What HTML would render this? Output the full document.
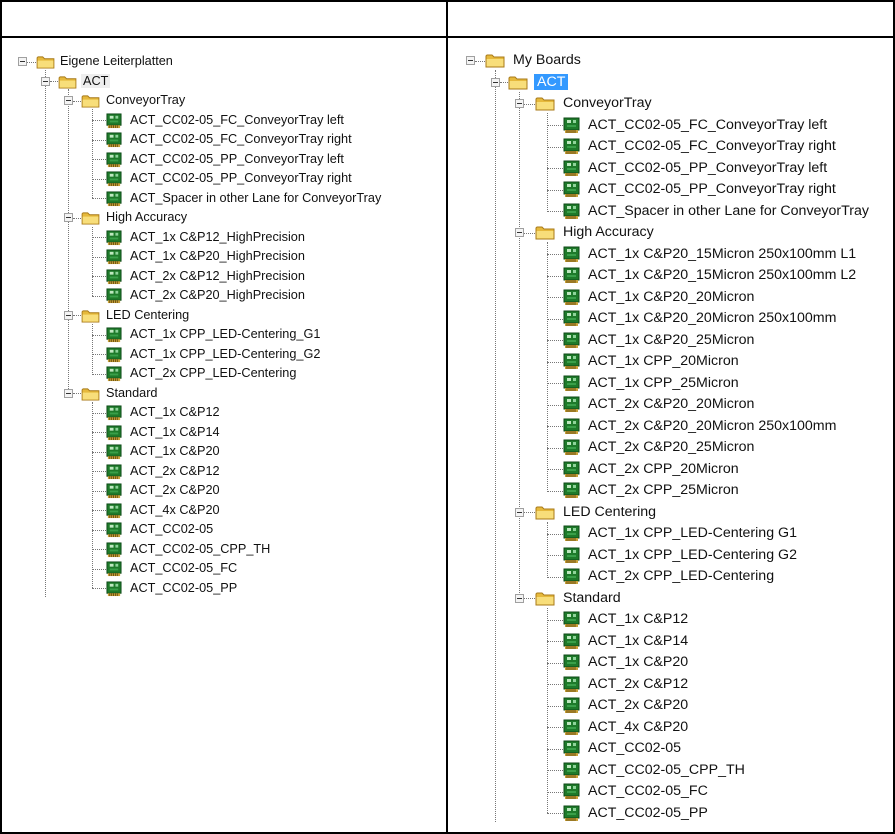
<!DOCTYPE html>
<html><head><meta charset="utf-8">
<style>
*{margin:0;padding:0;box-sizing:border-box}
html,body{width:895px;height:834px;background:#fff;overflow:hidden}
body{position:relative;font-family:"Liberation Sans",Tahoma,sans-serif;color:#111}
.b{position:absolute;background:#000}
.t{position:absolute}
.r{position:relative;white-space:nowrap}
.L .r{height:19.5px;font-size:12.7px;line-height:19.5px}
.R .r{height:21.5px;font-size:14.2px;line-height:21.5px}
.mn{position:absolute;width:9px;height:9px;border:1px solid #a0a0a0;background:#f4f4f4}
.mn:after{content:"";position:absolute;left:1px;top:3px;width:5px;height:1px;background:#333}
.hc{position:absolute;height:0;border-top:1px dotted #777}
.vc{position:absolute;width:0;border-left:1px dotted #777}
.tx{position:absolute;top:0}
.fo{position:absolute}
.bd{position:absolute}
.sel{background:#3399ff;color:#fff;padding:0 3px;margin-left:-3px}
.foc{background:#eee;padding:0 2px;margin-left:-2px}
</style></head><body>
<svg width="0" height="0" style="position:absolute">
<defs>
<symbol id="fold" viewBox="0 0 20 15"><path d="M1 3 L1 14 L19 14 L19 4 L9 4 L7 2 L2 2 Z" fill="#e6b93c" stroke="#a87a18" stroke-width="1"/><path d="M1.5 6 L18.5 6 L18.5 13.5 L1.5 13.5 Z" fill="#f8de7a"/></symbol>
<symbol id="brd" viewBox="0 0 17 17"><rect x="1" y="1" width="15" height="12" fill="#1e7a2a" stroke="#0d4a16"/><rect x="4" y="3" width="4" height="3" fill="#bfe8c0"/><rect x="10" y="3" width="3" height="3" fill="#8fd49a"/><rect x="4" y="8" width="9" height="2" fill="#3aa04a"/><rect x="2" y="13" width="13" height="3" fill="#c9a23a"/><path d="M4 13v3M6 13v3M8 13v3M10 13v3M12 13v3" stroke="#6b5010"/></symbol>
</defs></svg>

<div class="b" style="left:0;top:0;width:895px;height:2px"></div>
<div class="b" style="left:0;top:36px;width:895px;height:2px"></div>
<div class="b" style="left:0;top:832px;width:895px;height:2px"></div>
<div class="b" style="left:0;top:0;width:2px;height:834px"></div>
<div class="b" style="left:446px;top:0;width:2px;height:834px"></div>
<div class="b" style="left:893px;top:0;width:2px;height:834px"></div>

<div class="vc" style="left:45px;top:70px;height:527px"></div>
<div class="vc" style="left:68px;top:89px;height:304px"></div>
<div class="vc" style="left:92px;top:109px;height:89px"></div>
<div class="vc" style="left:92px;top:227px;height:69px"></div>
<div class="vc" style="left:92px;top:324px;height:49px"></div>
<div class="vc" style="left:92px;top:402px;height:186px"></div>

<div class="t L" style="left:0;top:52.25px;width:446px">
<div class="r"><span class="mn" style="left:18px;top:5px"></span><span class="hc" style="left:27px;width:9px;top:9.5px"></span><svg class="fo" style="left:36px;top:3px" width="19" height="14"><use href="#fold"/></svg><span class="tx" style="left:60px">Eigene Leiterplatten</span></div>
<div class="r"><span class="mn" style="left:41px;top:5px"></span><span class="hc" style="left:50px;width:8px;top:9.5px"></span><svg class="fo" style="left:58px;top:3px" width="19" height="14"><use href="#fold"/></svg><span class="tx" style="left:83px"><span class="foc">ACT</span></span></div>
<div class="r"><span class="mn" style="left:64px;top:5px"></span><span class="hc" style="left:73px;width:8px;top:9.5px"></span><svg class="fo" style="left:81px;top:3px" width="19" height="14"><use href="#fold"/></svg><span class="tx" style="left:106px">ConveyorTray</span></div>
<div class="r"><span class="hc" style="left:92px;width:14px;top:9.5px"></span><svg class="bd" style="left:106px;top:2px" width="16" height="16"><use href="#brd"/></svg><span class="tx" style="left:130px">ACT_CC02-05_FC_ConveyorTray left</span></div>
<div class="r"><span class="hc" style="left:92px;width:14px;top:9.5px"></span><svg class="bd" style="left:106px;top:2px" width="16" height="16"><use href="#brd"/></svg><span class="tx" style="left:130px">ACT_CC02-05_FC_ConveyorTray right</span></div>
<div class="r"><span class="hc" style="left:92px;width:14px;top:9.5px"></span><svg class="bd" style="left:106px;top:2px" width="16" height="16"><use href="#brd"/></svg><span class="tx" style="left:130px">ACT_CC02-05_PP_ConveyorTray left</span></div>
<div class="r"><span class="hc" style="left:92px;width:14px;top:9.5px"></span><svg class="bd" style="left:106px;top:2px" width="16" height="16"><use href="#brd"/></svg><span class="tx" style="left:130px">ACT_CC02-05_PP_ConveyorTray right</span></div>
<div class="r"><span class="hc" style="left:92px;width:14px;top:9.5px"></span><svg class="bd" style="left:106px;top:2px" width="16" height="16"><use href="#brd"/></svg><span class="tx" style="left:130px">ACT_Spacer in other Lane for ConveyorTray</span></div>
<div class="r"><span class="mn" style="left:64px;top:5px"></span><span class="hc" style="left:73px;width:8px;top:9.5px"></span><svg class="fo" style="left:81px;top:3px" width="19" height="14"><use href="#fold"/></svg><span class="tx" style="left:106px">High Accuracy</span></div>
<div class="r"><span class="hc" style="left:92px;width:14px;top:9.5px"></span><svg class="bd" style="left:106px;top:2px" width="16" height="16"><use href="#brd"/></svg><span class="tx" style="left:130px">ACT_1x C&amp;P12_HighPrecision</span></div>
<div class="r"><span class="hc" style="left:92px;width:14px;top:9.5px"></span><svg class="bd" style="left:106px;top:2px" width="16" height="16"><use href="#brd"/></svg><span class="tx" style="left:130px">ACT_1x C&amp;P20_HighPrecision</span></div>
<div class="r"><span class="hc" style="left:92px;width:14px;top:9.5px"></span><svg class="bd" style="left:106px;top:2px" width="16" height="16"><use href="#brd"/></svg><span class="tx" style="left:130px">ACT_2x C&amp;P12_HighPrecision</span></div>
<div class="r"><span class="hc" style="left:92px;width:14px;top:9.5px"></span><svg class="bd" style="left:106px;top:2px" width="16" height="16"><use href="#brd"/></svg><span class="tx" style="left:130px">ACT_2x C&amp;P20_HighPrecision</span></div>
<div class="r"><span class="mn" style="left:64px;top:5px"></span><span class="hc" style="left:73px;width:8px;top:9.5px"></span><svg class="fo" style="left:81px;top:3px" width="19" height="14"><use href="#fold"/></svg><span class="tx" style="left:106px">LED Centering</span></div>
<div class="r"><span class="hc" style="left:92px;width:14px;top:9.5px"></span><svg class="bd" style="left:106px;top:2px" width="16" height="16"><use href="#brd"/></svg><span class="tx" style="left:130px">ACT_1x CPP_LED-Centering_G1</span></div>
<div class="r"><span class="hc" style="left:92px;width:14px;top:9.5px"></span><svg class="bd" style="left:106px;top:2px" width="16" height="16"><use href="#brd"/></svg><span class="tx" style="left:130px">ACT_1x CPP_LED-Centering_G2</span></div>
<div class="r"><span class="hc" style="left:92px;width:14px;top:9.5px"></span><svg class="bd" style="left:106px;top:2px" width="16" height="16"><use href="#brd"/></svg><span class="tx" style="left:130px">ACT_2x CPP_LED-Centering</span></div>
<div class="r"><span class="mn" style="left:64px;top:5px"></span><span class="hc" style="left:73px;width:8px;top:9.5px"></span><svg class="fo" style="left:81px;top:3px" width="19" height="14"><use href="#fold"/></svg><span class="tx" style="left:106px">Standard</span></div>
<div class="r"><span class="hc" style="left:92px;width:14px;top:9.5px"></span><svg class="bd" style="left:106px;top:2px" width="16" height="16"><use href="#brd"/></svg><span class="tx" style="left:130px">ACT_1x C&amp;P12</span></div>
<div class="r"><span class="hc" style="left:92px;width:14px;top:9.5px"></span><svg class="bd" style="left:106px;top:2px" width="16" height="16"><use href="#brd"/></svg><span class="tx" style="left:130px">ACT_1x C&amp;P14</span></div>
<div class="r"><span class="hc" style="left:92px;width:14px;top:9.5px"></span><svg class="bd" style="left:106px;top:2px" width="16" height="16"><use href="#brd"/></svg><span class="tx" style="left:130px">ACT_1x C&amp;P20</span></div>
<div class="r"><span class="hc" style="left:92px;width:14px;top:9.5px"></span><svg class="bd" style="left:106px;top:2px" width="16" height="16"><use href="#brd"/></svg><span class="tx" style="left:130px">ACT_2x C&amp;P12</span></div>
<div class="r"><span class="hc" style="left:92px;width:14px;top:9.5px"></span><svg class="bd" style="left:106px;top:2px" width="16" height="16"><use href="#brd"/></svg><span class="tx" style="left:130px">ACT_2x C&amp;P20</span></div>
<div class="r"><span class="hc" style="left:92px;width:14px;top:9.5px"></span><svg class="bd" style="left:106px;top:2px" width="16" height="16"><use href="#brd"/></svg><span class="tx" style="left:130px">ACT_4x C&amp;P20</span></div>
<div class="r"><span class="hc" style="left:92px;width:14px;top:9.5px"></span><svg class="bd" style="left:106px;top:2px" width="16" height="16"><use href="#brd"/></svg><span class="tx" style="left:130px">ACT_CC02-05</span></div>
<div class="r"><span class="hc" style="left:92px;width:14px;top:9.5px"></span><svg class="bd" style="left:106px;top:2px" width="16" height="16"><use href="#brd"/></svg><span class="tx" style="left:130px">ACT_CC02-05_CPP_TH</span></div>
<div class="r"><span class="hc" style="left:92px;width:14px;top:9.5px"></span><svg class="bd" style="left:106px;top:2px" width="16" height="16"><use href="#brd"/></svg><span class="tx" style="left:130px">ACT_CC02-05_FC</span></div>
<div class="r"><span class="hc" style="left:92px;width:14px;top:9.5px"></span><svg class="bd" style="left:106px;top:2px" width="16" height="16"><use href="#brd"/></svg><span class="tx" style="left:130px">ACT_CC02-05_PP</span></div>
</div>

<div class="vc" style="left:495px;top:70px;height:752px"></div>
<div class="vc" style="left:519px;top:92px;height:507px"></div>
<div class="vc" style="left:547px;top:113px;height:99px"></div>
<div class="vc" style="left:547px;top:242px;height:250px"></div>
<div class="vc" style="left:547px;top:522px;height:56px"></div>
<div class="vc" style="left:547px;top:608px;height:205px"></div>

<div class="t R" style="left:0;top:50.25px;width:893px">
<div class="r"><span class="mn" style="left:466px;top:6px"></span><span class="hc" style="left:475px;width:10px;top:10.5px"></span><svg class="fo" style="left:485px;top:3px" width="20" height="15"><use href="#fold"/></svg><span class="tx" style="left:513px">My Boards</span></div>
<div class="r"><span class="mn" style="left:490.5px;top:6px"></span><span class="hc" style="left:499.5px;width:8px;top:10.5px"></span><svg class="fo" style="left:508px;top:3px" width="20" height="15"><use href="#fold"/></svg><span class="tx" style="left:537px"><span class="sel">ACT</span></span></div>
<div class="r"><span class="mn" style="left:515px;top:6px"></span><span class="hc" style="left:524px;width:11px;top:10.5px"></span><svg class="fo" style="left:535px;top:3px" width="20" height="15"><use href="#fold"/></svg><span class="tx" style="left:563px">ConveyorTray</span></div>
<div class="r"><span class="hc" style="left:547px;width:16px;top:10.5px"></span><svg class="bd" style="left:563px;top:2px" width="17" height="17"><use href="#brd"/></svg><span class="tx" style="left:588px">ACT_CC02-05_FC_ConveyorTray left</span></div>
<div class="r"><span class="hc" style="left:547px;width:16px;top:10.5px"></span><svg class="bd" style="left:563px;top:2px" width="17" height="17"><use href="#brd"/></svg><span class="tx" style="left:588px">ACT_CC02-05_FC_ConveyorTray right</span></div>
<div class="r"><span class="hc" style="left:547px;width:16px;top:10.5px"></span><svg class="bd" style="left:563px;top:2px" width="17" height="17"><use href="#brd"/></svg><span class="tx" style="left:588px">ACT_CC02-05_PP_ConveyorTray left</span></div>
<div class="r"><span class="hc" style="left:547px;width:16px;top:10.5px"></span><svg class="bd" style="left:563px;top:2px" width="17" height="17"><use href="#brd"/></svg><span class="tx" style="left:588px">ACT_CC02-05_PP_ConveyorTray right</span></div>
<div class="r"><span class="hc" style="left:547px;width:16px;top:10.5px"></span><svg class="bd" style="left:563px;top:2px" width="17" height="17"><use href="#brd"/></svg><span class="tx" style="left:588px">ACT_Spacer in other Lane for ConveyorTray</span></div>
<div class="r"><span class="mn" style="left:515px;top:6px"></span><span class="hc" style="left:524px;width:11px;top:10.5px"></span><svg class="fo" style="left:535px;top:3px" width="20" height="15"><use href="#fold"/></svg><span class="tx" style="left:563px">High Accuracy</span></div>
<div class="r"><span class="hc" style="left:547px;width:16px;top:10.5px"></span><svg class="bd" style="left:563px;top:2px" width="17" height="17"><use href="#brd"/></svg><span class="tx" style="left:588px">ACT_1x C&amp;P20_15Micron 250x100mm L1</span></div>
<div class="r"><span class="hc" style="left:547px;width:16px;top:10.5px"></span><svg class="bd" style="left:563px;top:2px" width="17" height="17"><use href="#brd"/></svg><span class="tx" style="left:588px">ACT_1x C&amp;P20_15Micron 250x100mm L2</span></div>
<div class="r"><span class="hc" style="left:547px;width:16px;top:10.5px"></span><svg class="bd" style="left:563px;top:2px" width="17" height="17"><use href="#brd"/></svg><span class="tx" style="left:588px">ACT_1x C&amp;P20_20Micron</span></div>
<div class="r"><span class="hc" style="left:547px;width:16px;top:10.5px"></span><svg class="bd" style="left:563px;top:2px" width="17" height="17"><use href="#brd"/></svg><span class="tx" style="left:588px">ACT_1x C&amp;P20_20Micron 250x100mm</span></div>
<div class="r"><span class="hc" style="left:547px;width:16px;top:10.5px"></span><svg class="bd" style="left:563px;top:2px" width="17" height="17"><use href="#brd"/></svg><span class="tx" style="left:588px">ACT_1x C&amp;P20_25Micron</span></div>
<div class="r"><span class="hc" style="left:547px;width:16px;top:10.5px"></span><svg class="bd" style="left:563px;top:2px" width="17" height="17"><use href="#brd"/></svg><span class="tx" style="left:588px">ACT_1x CPP_20Micron</span></div>
<div class="r"><span class="hc" style="left:547px;width:16px;top:10.5px"></span><svg class="bd" style="left:563px;top:2px" width="17" height="17"><use href="#brd"/></svg><span class="tx" style="left:588px">ACT_1x CPP_25Micron</span></div>
<div class="r"><span class="hc" style="left:547px;width:16px;top:10.5px"></span><svg class="bd" style="left:563px;top:2px" width="17" height="17"><use href="#brd"/></svg><span class="tx" style="left:588px">ACT_2x C&amp;P20_20Micron</span></div>
<div class="r"><span class="hc" style="left:547px;width:16px;top:10.5px"></span><svg class="bd" style="left:563px;top:2px" width="17" height="17"><use href="#brd"/></svg><span class="tx" style="left:588px">ACT_2x C&amp;P20_20Micron 250x100mm</span></div>
<div class="r"><span class="hc" style="left:547px;width:16px;top:10.5px"></span><svg class="bd" style="left:563px;top:2px" width="17" height="17"><use href="#brd"/></svg><span class="tx" style="left:588px">ACT_2x C&amp;P20_25Micron</span></div>
<div class="r"><span class="hc" style="left:547px;width:16px;top:10.5px"></span><svg class="bd" style="left:563px;top:2px" width="17" height="17"><use href="#brd"/></svg><span class="tx" style="left:588px">ACT_2x CPP_20Micron</span></div>
<div class="r"><span class="hc" style="left:547px;width:16px;top:10.5px"></span><svg class="bd" style="left:563px;top:2px" width="17" height="17"><use href="#brd"/></svg><span class="tx" style="left:588px">ACT_2x CPP_25Micron</span></div>
<div class="r"><span class="mn" style="left:515px;top:6px"></span><span class="hc" style="left:524px;width:11px;top:10.5px"></span><svg class="fo" style="left:535px;top:3px" width="20" height="15"><use href="#fold"/></svg><span class="tx" style="left:563px">LED Centering</span></div>
<div class="r"><span class="hc" style="left:547px;width:16px;top:10.5px"></span><svg class="bd" style="left:563px;top:2px" width="17" height="17"><use href="#brd"/></svg><span class="tx" style="left:588px">ACT_1x CPP_LED-Centering G1</span></div>
<div class="r"><span class="hc" style="left:547px;width:16px;top:10.5px"></span><svg class="bd" style="left:563px;top:2px" width="17" height="17"><use href="#brd"/></svg><span class="tx" style="left:588px">ACT_1x CPP_LED-Centering G2</span></div>
<div class="r"><span class="hc" style="left:547px;width:16px;top:10.5px"></span><svg class="bd" style="left:563px;top:2px" width="17" height="17"><use href="#brd"/></svg><span class="tx" style="left:588px">ACT_2x CPP_LED-Centering</span></div>
<div class="r"><span class="mn" style="left:515px;top:6px"></span><span class="hc" style="left:524px;width:11px;top:10.5px"></span><svg class="fo" style="left:535px;top:3px" width="20" height="15"><use href="#fold"/></svg><span class="tx" style="left:563px">Standard</span></div>
<div class="r"><span class="hc" style="left:547px;width:16px;top:10.5px"></span><svg class="bd" style="left:563px;top:2px" width="17" height="17"><use href="#brd"/></svg><span class="tx" style="left:588px">ACT_1x C&amp;P12</span></div>
<div class="r"><span class="hc" style="left:547px;width:16px;top:10.5px"></span><svg class="bd" style="left:563px;top:2px" width="17" height="17"><use href="#brd"/></svg><span class="tx" style="left:588px">ACT_1x C&amp;P14</span></div>
<div class="r"><span class="hc" style="left:547px;width:16px;top:10.5px"></span><svg class="bd" style="left:563px;top:2px" width="17" height="17"><use href="#brd"/></svg><span class="tx" style="left:588px">ACT_1x C&amp;P20</span></div>
<div class="r"><span class="hc" style="left:547px;width:16px;top:10.5px"></span><svg class="bd" style="left:563px;top:2px" width="17" height="17"><use href="#brd"/></svg><span class="tx" style="left:588px">ACT_2x C&amp;P12</span></div>
<div class="r"><span class="hc" style="left:547px;width:16px;top:10.5px"></span><svg class="bd" style="left:563px;top:2px" width="17" height="17"><use href="#brd"/></svg><span class="tx" style="left:588px">ACT_2x C&amp;P20</span></div>
<div class="r"><span class="hc" style="left:547px;width:16px;top:10.5px"></span><svg class="bd" style="left:563px;top:2px" width="17" height="17"><use href="#brd"/></svg><span class="tx" style="left:588px">ACT_4x C&amp;P20</span></div>
<div class="r"><span class="hc" style="left:547px;width:16px;top:10.5px"></span><svg class="bd" style="left:563px;top:2px" width="17" height="17"><use href="#brd"/></svg><span class="tx" style="left:588px">ACT_CC02-05</span></div>
<div class="r"><span class="hc" style="left:547px;width:16px;top:10.5px"></span><svg class="bd" style="left:563px;top:2px" width="17" height="17"><use href="#brd"/></svg><span class="tx" style="left:588px">ACT_CC02-05_CPP_TH</span></div>
<div class="r"><span class="hc" style="left:547px;width:16px;top:10.5px"></span><svg class="bd" style="left:563px;top:2px" width="17" height="17"><use href="#brd"/></svg><span class="tx" style="left:588px">ACT_CC02-05_FC</span></div>
<div class="r"><span class="hc" style="left:547px;width:16px;top:10.5px"></span><svg class="bd" style="left:563px;top:2px" width="17" height="17"><use href="#brd"/></svg><span class="tx" style="left:588px">ACT_CC02-05_PP</span></div>
</div>
</body></html>
